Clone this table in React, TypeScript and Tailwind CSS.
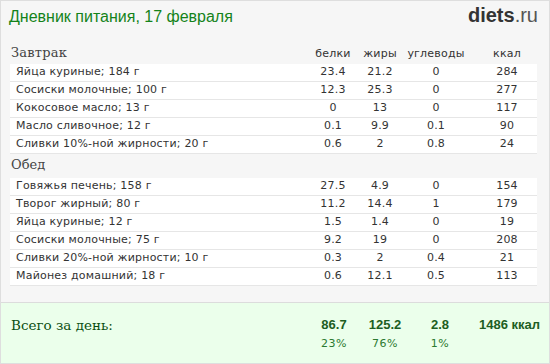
import React from "react";

type Item = { name: string; b: string; f: string; c: string; k: string };

const breakfast: Item[] = [
  { name: "Яйца куриные; 184 г", b: "23.4", f: "21.2", c: "0", k: "284" },
  { name: "Сосиски молочные; 100 г", b: "12.3", f: "25.3", c: "0", k: "277" },
  { name: "Кокосовое масло; 13 г", b: "0", f: "13", c: "0", k: "117" },
  { name: "Масло сливочное; 12 г", b: "0.1", f: "9.9", c: "0.1", k: "90" },
  { name: "Сливки 10%-ной жирности; 20 г", b: "0.6", f: "2", c: "0.8", k: "24" },
];

const lunch: Item[] = [
  { name: "Говяжья печень; 158 г", b: "27.5", f: "4.9", c: "0", k: "154" },
  { name: "Творог жирный; 80 г", b: "11.2", f: "14.4", c: "1", k: "179" },
  { name: "Яйца куриные; 12 г", b: "1.5", f: "1.4", c: "0", k: "19" },
  { name: "Сосиски молочные; 75 г", b: "9.2", f: "19", c: "0", k: "208" },
  { name: "Сливки 20%-ной жирности; 10 г", b: "0.3", f: "2", c: "0.4", k: "21" },
  { name: "Майонез домашний; 18 г", b: "0.6", f: "12.1", c: "0.5", k: "113" },
];

function Row({ it }: { it: Item }) {
  return (
    <div className="grid grid-cols-[300px_46px_48px_64px_69px] h-[18px] items-center bg-white border-b border-[#e6e6e6] text-[11px] tracking-[0.2px] text-[#333]">
      <div className="pl-[6px] whitespace-nowrap">{it.name}</div>
      <div className="text-center">{it.b}</div>
      <div className="text-center">{it.f}</div>
      <div className="text-center">{it.c}</div>
      <div className="text-center pl-[9px]">{it.k}</div>
    </div>
  );
}

export default function App() {
  return (
    <div
      className="w-[550px] h-[364px] border border-[#dedede] bg-[#f6f6f6] flex flex-col overflow-hidden"
      style={{ fontFamily: '"DejaVu Sans", Verdana, sans-serif' }}
    >
      <div className="h-[43px] flex justify-between pl-[8px] pr-[11px]">
        <div
          className="mt-[6px] text-[16px] leading-[20px] text-[#14831a]"
          style={{ fontFamily: '"Liberation Sans", Arial, sans-serif' }}
        >
          Дневник питания, 17 февраля
        </div>
        <div
          className="mt-[2px] text-[20px] leading-[24px] text-[#333]"
          style={{ fontFamily: '"Liberation Sans", Arial, sans-serif' }}
        >
          <span className="font-bold">diets</span>
          <span className="text-[#555]">.ru</span>
        </div>
      </div>

      <div className="ml-[9px] w-[527px] flex flex-col">
        <div className="grid grid-cols-[300px_46px_48px_64px_69px] h-[20px] items-end pb-[2px] text-[11px] tracking-[0.2px] text-[#333]">
          <div
            className="pl-[1px] text-[13px] leading-[18px] text-[#444]"
            style={{ fontFamily: '"DejaVu Serif", Georgia, serif' }}
          >
            Завтрак
          </div>
          <div className="text-center">белки</div>
          <div className="text-center">жиры</div>
          <div className="text-center">углеводы</div>
          <div className="text-center pl-[9px]">ккал</div>
        </div>
        {breakfast.map((it, i) => (
          <Row key={i} it={it} />
        ))}
        <div className="h-[24px] flex items-end pb-[4px]">
          <div
            className="pl-[1px] text-[13px] leading-[18px] text-[#444]"
            style={{ fontFamily: '"DejaVu Serif", Georgia, serif' }}
          >
            Обед
          </div>
        </div>
        {lunch.map((it, i) => (
          <Row key={i} it={it} />
        ))}
      </div>

      <div className="mt-[16px] flex-1 border-t border-[#dcdcdc] bg-[#ebffeb]">
        <div className="grid grid-cols-[309px_48px_54px_56px_69px] pt-[12px]">
          <div
            className="pl-[10px] text-[13.5px] leading-[20px] text-[#0c4f12]"
            style={{ fontFamily: '"DejaVu Serif", Georgia, serif' }}
          >
            Всего за день:
          </div>
          {["86.7", "125.2", "2.8"].map((v, i) => (
            <div
              key={i}
              className="text-center font-bold text-[13px] leading-[20px] text-[#1d5e22]"
              style={{ fontFamily: '"Liberation Sans", Arial, sans-serif' }}
            >
              {v}
            </div>
          ))}
          <div
            className="text-center pl-[11px] font-bold text-[13px] leading-[20px] text-[#1d5e22] whitespace-nowrap"
            style={{ fontFamily: '"Liberation Sans", Arial, sans-serif' }}
          >
            1486 ккал
          </div>
          <div />
          {["23%", "76%", "1%"].map((v, i) => (
            <div key={i} className="text-center text-[11px] leading-[16px] mt-[1px] tracking-[0.5px] text-[#2c7a30]">
              {v}
            </div>
          ))}
          <div />
        </div>
      </div>
    </div>
  );
}
